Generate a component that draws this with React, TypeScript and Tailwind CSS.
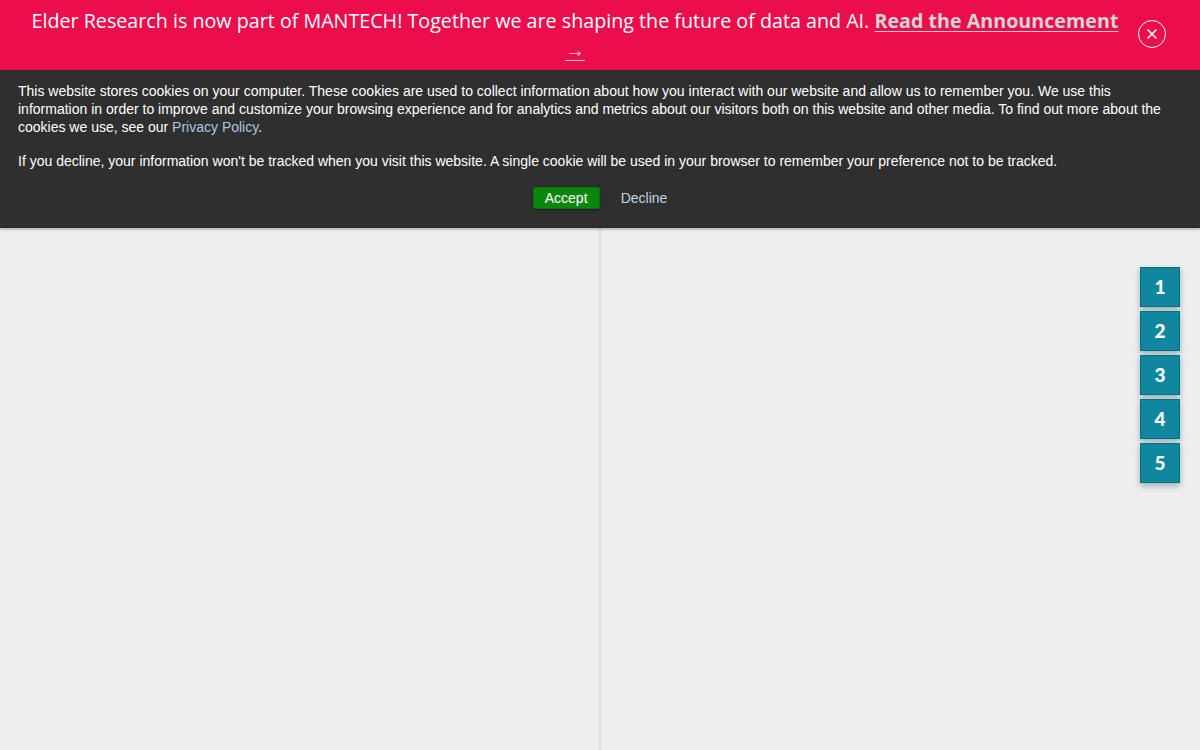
import { X } from "lucide-react"

const steps = [1, 2, 3, 4, 5]

function AnnouncementBar() {
    return (
        <div className="flex h-[70px] items-start bg-[#ec0e4c]">
            <div className="flex-1 pl-[16px] pr-[4px] pt-[6px] text-center text-[19.7px] leading-[29px] text-white" style={{ fontFamily: '"Open Sans", "Noto Sans", sans-serif' }}>
                Elder Research is now part of MANTECH! Together we are shaping the future of data and AI.{" "}
                <a href="#" className="font-bold text-[#d6d6d6] underline underline-offset-[3px]">
                    Read the Announcement
                    <br />→
                </a>
            </div>
            <button className="mr-[34px] mt-[20px] flex h-[28px] w-[28px] items-center justify-center rounded-full border border-white text-white">
                <X size={16} strokeWidth={2.5} />
            </button>
        </div>
    )
}

function CookieBanner() {
    return (
        <div className="relative z-10 bg-[#2f2f2f] px-[18px] pb-[19px] pt-[12px] text-[14px] leading-[18px] text-white shadow-[0_1px_3px_rgba(0,0,0,0.35)]" style={{ fontFamily: '"Liberation Sans", Arial, sans-serif' }}>
            <p>
                This website stores cookies on your computer. These cookies are used to collect information about how you interact with our website and allow us to remember you. We use this information in order to improve and customize your browsing experience and for analytics and metrics about our visitors both on this website and other media. To find out more about the cookies we use, see our{" "}
                <a href="#" className="text-[#a9c6e2]">Privacy Policy</a>.
            </p>
            <p className="mt-[16px]">
                If you decline, your information won't be tracked when you visit this website. A single cookie will be used in your browser to remember your preference not to be tracked.
            </p>
            <div className="mt-[17px] flex items-center justify-center gap-[21px]">
                <button className="h-[22px] w-[67px] rounded-[2px] border border-[#0b6e0b] bg-[#0a870a] text-[14px] text-white shadow-[0_1px_2px_rgba(0,0,0,0.4)]">
                    Accept
                </button>
                <button className="text-[14px] text-[#c2d3e4]">Decline</button>
            </div>
        </div>
    )
}

export default function App() {
    return (
        <div className="flex h-[750px] flex-col overflow-hidden bg-[#eeeeee]">
            <AnnouncementBar />
            <CookieBanner />
            <div className="relative flex flex-1">
                <div className="w-[601px] border-r-2 border-[#dddddd]" />
                <div className="flex-1" />
                {/* step markers */}
                <div className="absolute right-[20px] top-[39px] flex flex-col gap-[4px]">
                    {steps.map((n) => (
                        <div key={n} className="flex h-[40px] w-[40px] items-center justify-center border border-[#0b6d80] bg-[#0e879f] text-[19px] font-black text-white shadow-[0_3px_6px_rgba(0,60,80,0.35)]" style={{ fontFamily: 'Lato, "Open Sans", sans-serif' }}>
                            {n}
                        </div>
                    ))}
                </div>
            </div>
        </div>
    )
}
